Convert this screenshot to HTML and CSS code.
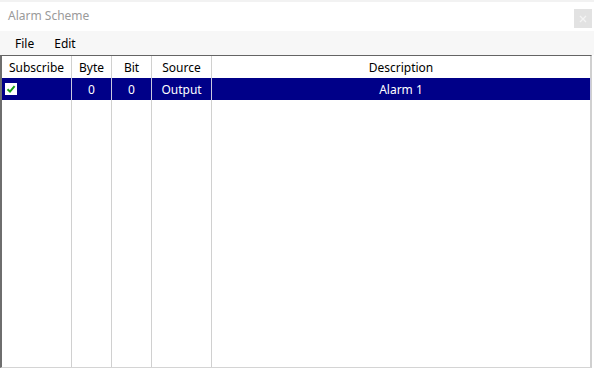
FILE: index.html
```html
<!DOCTYPE html>
<html>
<head>
<meta charset="utf-8">
<link rel="stylesheet" href="styles.css">
</head>
<body>
<div class="window">
  <div class="topline"></div>
  <div class="titlebar">
    <span class="title">Alarm Scheme</span>
    <div class="close">
      <svg width="8" height="8" viewBox="0 0 8 8"><path d="M1 1L7 7M7 1L1 7" stroke="#f4f4f4" stroke-width="1.3"/></svg>
    </div>
  </div>
  <div class="menubar">
    <span class="menu-item">File</span>
    <span class="menu-item">Edit</span>
  </div>
  <div class="table">
    <div class="grid">
      <div class="cell head">Subscribe</div>
      <div class="cell head">Byte</div>
      <div class="cell head">Bit</div>
      <div class="cell head">Source</div>
      <div class="cell head">Description</div>

      <div class="cell sel left"><span class="check"><svg width="10" height="10" viewBox="0 0 10 10"><path d="M1.5 5.2L4 7.6L8.6 2.2" fill="none" stroke="#16a016" stroke-width="2"/></svg></span></div>
      <div class="cell sel">0</div>
      <div class="cell sel">0</div>
      <div class="cell sel">Output</div>
      <div class="cell sel">Alarm 1</div>

      <div class="cell fill"></div>
      <div class="cell fill"></div>
      <div class="cell fill"></div>
      <div class="cell fill"></div>
      <div class="cell fill"></div>
    </div>
  </div>
</div>
</body>
</html>
```
FILE: styles.css
```css
html, body {
  margin: 0;
  padding: 0;
  background: #ffffff;
}
.window {
  width: 594px;
  height: 370px;
  display: flex;
  flex-direction: column;
  font-family: "Noto Sans", "Open Sans", sans-serif;
  font-size: 12px;
  color: #000;
  overflow: hidden;
}
.topline {
  height: 2px;
  background: #f2f2f2;
}
.titlebar {
  height: 29px;
  display: flex;
  align-items: center;
  justify-content: space-between;
  background: #fff;
}
.title {
  margin-left: 8px;
  margin-top: -3px;
  color: #9a9a9a;
}
.close {
  width: 18px;
  height: 19px;
  margin-right: 2px;
  margin-top: 4px;
  background: #e2e2e2;
  display: flex;
  align-items: center;
  justify-content: center;
}
.menubar {
  height: 24px;
  background: #f7f7f7;
  display: flex;
  align-items: center;
  padding-left: 15px;
  gap: 20px;
}
.menu-item {
  color: #000;
}
.table {
  flex: 1;
  width: 589px;
  border-top: 1px solid #646464;
  border-left: 2px solid #6e6e6e;
  border-right: 1px solid #d0d0d0;
  border-bottom: 1px solid #d4d4d4;
  margin-bottom: 2px;
  display: flex;
}
.grid {
  flex: 1;
  display: grid;
  grid-template-columns: 70px 40px 40px 60px 1fr;
  grid-template-rows: 22px 22px 1fr;
}
.cell {
  border-right: 1px solid #d0d0d0;
  display: flex;
  align-items: center;
  justify-content: center;
  white-space: nowrap;
}
.head {
  background: #fff;
}
.sel {
  background: #000088;
  color: #fff;
  border-right-color: #c8c8e0;
}
.sel.left {
  justify-content: flex-start;
  padding-left: 3px;
}
.check {
  width: 12px;
  height: 12px;
  background: #fff;
  display: flex;
  align-items: center;
  justify-content: center;
}
.fill {
  background: #fff;
}
```
